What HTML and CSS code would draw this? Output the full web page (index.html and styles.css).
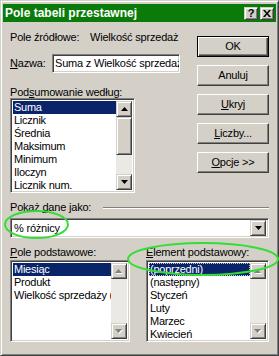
FILE: index.html
```html
<!DOCTYPE html>
<html>
<head>
<meta charset="utf-8">
<title>Pole tabeli przestawnej</title>
<link rel="stylesheet" href="styles.css">
</head>
<body>
<div class="screen">
  <div class="window">
    <div class="titlebar">
      <span class="title">Pole tabeli przestawnej</span>
      <div class="tbtns">
        <span class="tbtn raised help">?</span>
        <span class="tbtn raised close"><svg width="8" height="7" viewBox="0 0 8 7"><path d="M0 0h2l2 2.4L6 0h2L5 3.5 8 7H6L4 4.6 2 7H0l3-3.5z" fill="#000"/></svg></span>
      </div>
    </div>
    <div class="content">
      <div class="top">
        <div class="left">
          <div class="row-src"><span class="lbl-src">Pole źródłowe:</span><span>Wielkość sprzedaż</span></div>
          <div class="row-name"><span class="lbl-name"><u>N</u>azwa:</span><div class="field sunken">Suma z Wielkość sprzedaż</div></div>
          <div class="caption">Pod<u>s</u>umowanie według:</div>
          <div class="list sunken list1">
            <div class="items">
              <div class="item sel">Suma</div>
              <div class="item">Licznik</div>
              <div class="item">Średnia</div>
              <div class="item">Maksimum</div>
              <div class="item">Minimum</div>
              <div class="item">Iloczyn</div>
              <div class="item">Licznik num.</div>
            </div>
            <div class="scrollbar">
              <div class="sbtn raised"><svg width="7" height="4" viewBox="0 0 7 4"><path d="M3.5 0L7 4H0z" fill="#000"/></svg></div>
              <div class="track"><div class="thumb raised"></div></div>
              <div class="sbtn raised"><svg width="7" height="4" viewBox="0 0 7 4"><path d="M0 0h7L3.5 4z" fill="#000"/></svg></div>
            </div>
          </div>
        </div>
        <div class="buttons">
          <div class="btn default">OK</div>
          <div class="btn">Anuluj</div>
          <div class="btn"><span><u>U</u>kryj</span></div>
          <div class="btn"><span><u>L</u>iczby...</span></div>
          <div class="btn"><span><u>O</u>pcje &gt;&gt;</span></div>
        </div>
      </div>
      <div class="caption sep"><span>Pokaż <u>d</u>ane jako:</span><span class="line"></span></div>
      <div class="combo sunken">
        <span class="ctext">% różnicy</span>
        <span class="sbtn raised"><svg width="7" height="4" viewBox="0 0 7 4"><path d="M0 0h7L3.5 4z" fill="#000"/></svg></span>
      </div>
      <div class="bottom">
        <div class="col">
          <div class="caption low"><u>P</u>ole podstawowe:</div>
          <div class="list sunken list2">
            <div class="items">
              <div class="item sel">Miesiąc</div>
              <div class="item">Produkt</div>
              <div class="item">Wielkość sprzedaży (</div>
            </div>
            <div class="scrollbar">
              <div class="sbtn raised"><svg width="8" height="5" viewBox="0 0 8 5"><path d="M4.5 1L8 5H1z" fill="#fff"/><path d="M3.5 0L7 4H0z" fill="#808080"/></svg></div>
              <div class="track"></div>
              <div class="sbtn raised"><svg width="8" height="5" viewBox="0 0 8 5"><path d="M1 1h7L4.5 5z" fill="#fff"/><path d="M0 0h7L3.5 4z" fill="#808080"/></svg></div>
            </div>
          </div>
        </div>
        <div class="col">
          <div class="caption low"><u>E</u>lement podstawowy:</div>
          <div class="list sunken list3">
            <div class="items">
              <div class="item sel focus">(poprzedni)</div>
              <div class="item">(następny)</div>
              <div class="item">Styczeń</div>
              <div class="item">Luty</div>
              <div class="item">Marzec</div>
              <div class="item">Kwiecień</div>
            </div>
            <div class="scrollbar">
              <div class="sbtn raised"><svg width="8" height="5" viewBox="0 0 8 5"><path d="M4.5 1L8 5H1z" fill="#fff"/><path d="M3.5 0L7 4H0z" fill="#808080"/></svg></div>
              <div class="track"></div>
              <div class="sbtn raised"><svg width="8" height="5" viewBox="0 0 8 5"><path d="M1 1h7L4.5 5z" fill="#fff"/><path d="M0 0h7L3.5 4z" fill="#808080"/></svg></div>
            </div>
          </div>
        </div>
      </div>
    </div>
  </div>
  <svg class="marks" width="279" height="356" viewBox="0 0 279 356">
    <ellipse cx="36.5" cy="224.5" rx="31.5" ry="13.5" fill="none" stroke="#33dd33" stroke-width="2"/>
    <ellipse cx="203" cy="259" rx="75" ry="16" fill="none" stroke="#33dd33" stroke-width="2"/>
  </svg>
</div>
</body>
</html>
```
FILE: styles.css
```css
* { box-sizing: border-box; }
html, body { margin: 0; padding: 0; }
body {
  background: #d4d0c8;
  font-family: "Liberation Sans", Arial, sans-serif;
  font-size: 11px;
  letter-spacing: -0.2px;
  color: #000;
}
u { text-decoration: underline; }

.screen { position: relative; width: 279px; height: 356px; }

.window {
  width: 279px;
  height: 356px;
  background: #d4d0c8;
  border: 1px solid;
  border-color: #d4d0c8 #404040 #404040 #d4d0c8;
  box-shadow: inset 1px 1px #fff, inset -1px -1px #808080;
  padding: 3px 2px 2px 2px;
}

.raised {
  border: 1px solid;
  border-color: #d4d0c8 #404040 #404040 #d4d0c8;
  box-shadow: inset 1px 1px #fff, inset -1px -1px #808080;
  background: #d4d0c8;
}
.sunken {
  border: 1px solid;
  border-color: #808080 #fff #fff #808080;
  box-shadow: inset 1px 1px #404040, inset -1px -1px #d4d0c8;
  background: #fff;
}

.titlebar {
  height: 18px;
  background: #0a7a0a;
  display: flex;
  align-items: center;
  padding: 0 2px 0 2px;
}
.title {
  color: #fff;
  font-weight: bold;
  font-size: 12px;
  letter-spacing: 0;
  line-height: 14px;
  white-space: nowrap;
}
.tbtns { margin-left: auto; display: flex; gap: 2px; }
.tbtn {
  width: 14px;
  height: 13px;
  display: flex;
  align-items: center;
  justify-content: center;
  font-weight: bold;
  font-size: 11px;
  line-height: 11px;
}

.content { padding: 9px 7px 0 7px; }

.top { display: flex; align-items: flex-start; }
.left { width: 170px; }
.row-src { display: flex; height: 13px; line-height: 13px; white-space: nowrap; }
.lbl-src { width: 80px; flex: none; }
.row-name { display: flex; align-items: center; height: 19px; margin-top: 10px; }
.lbl-name { width: 42px; flex: none; line-height: 13px; }
.field {
  flex: 1;
  height: 19px;
  padding: 2px 2px 0 2px;
  line-height: 13px;
  white-space: nowrap;
  overflow: hidden;
}

.caption { height: 12px; line-height: 13px; margin-top: 13px; white-space: nowrap; }

.list { display: flex; padding: 2px; }
.list1 { width: 125px; height: 95px; }
.items { flex: 1; min-width: 0; overflow: hidden; }
.item {
  height: 13px;
  line-height: 13px;
  padding-left: 1px;
  letter-spacing: -0.25px;
  white-space: nowrap;
  overflow: hidden;
}
.item.sel { background: #0a246a; color: #fff; }
.item.focus { outline: 1px dotted #c8c8c8; outline-offset: -1px; }

.scrollbar { width: 16px; flex: none; display: flex; flex-direction: column; }
.sbtn {
  width: 16px;
  height: 16px;
  flex: none;
  display: flex;
  align-items: center;
  justify-content: center;
}
.track { flex: 1; background: #ebe9e4; }
.thumb { height: 38px; }

.buttons {
  margin-left: auto;
  margin-top: 5px;
  width: 72px;
  display: flex;
  flex-direction: column;
  gap: 8px;
}
.btn {
  height: 21px;
  display: flex;
  align-items: center;
  justify-content: center;
  border: 1px solid;
  border-color: #fff #404040 #404040 #fff;
  box-shadow: inset -1px -1px #808080;
  background: #d4d0c8;
  line-height: 13px;
}
.btn.default {
  border-color: #000;
  box-shadow: inset 1px 1px #fff, inset -1px -1px #404040, inset -2px -2px #808080;
}

.caption.sep {
  display: flex;
  align-items: center;
  height: 13px;
  margin-top: 8px;
}
.line {
  flex: 1;
  height: 2px;
  border-top: 1px solid #808080;
  border-bottom: 1px solid #fff;
  margin-left: 12px;
}

.combo {
  margin-top: 4px;
  height: 20px;
  display: flex;
  align-items: center;
  padding: 2px;
}
.ctext { flex: 1; padding-left: 1px; line-height: 13px; white-space: nowrap; }

.bottom {
  margin-top: 8px;
  display: grid;
  grid-template-columns: 120px 1fr;
  column-gap: 16px;
}
.caption.low { margin-top: 0; height: 14px; line-height: 13px; }
.list2, .list3 { height: 82px; }

.marks { position: absolute; left: 0; top: 0; pointer-events: none; }
```
